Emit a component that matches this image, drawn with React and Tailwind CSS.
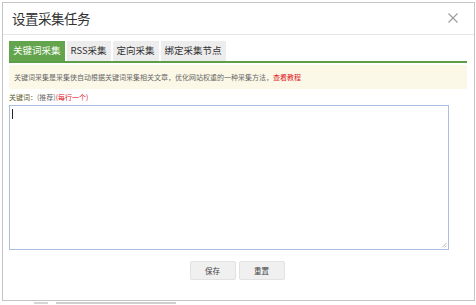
import React from 'react';

const font = { fontFamily: '"Noto Sans CJK SC", "Liberation Sans", sans-serif' };

const tabs = ['关键词采集', 'RSS采集', '定向采集', '绑定采集节点'];

const App = () => {
  return (
    <div className="relative w-[476px] h-[305px] bg-white overflow-hidden" style={font}>
      <div className="ml-[2px] mt-[2px] w-[473px] h-[299px] border border-[#c4c4c4] bg-white flex flex-col">
        {/* header */}
        <div className="h-[32px] shrink-0 border-b border-[#e6e6e6] flex items-center justify-between pl-[9px] pr-[16px]">
          <span className="text-[13.5px] text-[#333] leading-none tracking-[-0.5px]">设置采集任务</span>
          <svg width="10" height="10" viewBox="0 0 10 10" className="mt-[-2px]">
            <path d="M0.5 0.5 L9.5 9.5 M9.5 0.5 L0.5 9.5" stroke="#9a9a9a" strokeWidth="1.1" />
          </svg>
        </div>

        <div className="pl-[6px] pr-[7px] pt-[6px] flex flex-col">
          {/* tabs */}
          <div className="flex gap-[2px] border-b-2 border-[#5d9e48] h-[22px]">
            {tabs.map((t, i) => (
              <div
                key={t}
                className={`h-[20px] px-[4px] flex items-center text-[9.5px] leading-none ${
                  i === 0 ? 'bg-[#63a44d] text-white' : 'bg-[#ededed] text-[#333]'
                }`}
              >
                {t}
              </div>
            ))}
          </div>

          {/* info */}
          <div className="mt-[2px] h-[24px] bg-[#fbf8e7] rounded-[2px] flex items-center pl-[5px] text-[7px] text-[#666] leading-none">
            关键词采集是采集侠自动根据关键词采集相关文章，优化网站权重的一种采集方法，
            <span className="text-[#e0131b]">查看教程</span>
          </div>

          {/* label */}
          <div className="h-[16px] flex items-center text-[7px] leading-none">
            <span className="text-[#5d5a1e]">关键词：</span>
            <span className="text-[#666]">(推荐)</span>
            <span className="text-[#e0131b]">(每行一个)</span>
          </div>

          {/* textarea */}
          <div className="relative w-[440px] h-[145px] border border-[#a9bfe2] bg-white">
            <div className="ml-[2px] mt-[3px] w-px h-[10px] bg-[#222]" />
            <svg width="6" height="6" viewBox="0 0 6 6" className="absolute right-[1px] bottom-[1px]">
              <path d="M5.5 1 L1 5.5 M5.5 3.5 L3.5 5.5" stroke="#b0b0b0" strokeWidth="0.8" />
            </svg>
          </div>

          {/* buttons */}
          <div className="mt-[11px] flex justify-center gap-[3px] pr-[2px]">
            <button className="w-[46px] h-[19px] bg-[#f0f0f0] border border-[#e2e2e2] rounded-[2px] text-[7.5px] text-[#444] leading-none">
              保存
            </button>
            <button className="w-[46px] h-[19px] bg-[#f0f0f0] border border-[#e2e2e2] rounded-[2px] text-[7.5px] text-[#444] leading-none">
              重置
            </button>
          </div>
        </div>
      </div>
      {/* page behind the dialog, barely visible under its bottom edge */}
      <div className="absolute left-[34px] top-[302px] flex gap-[8px]">
        <div className="w-[14px] h-[2px] bg-[#d6d6d6]" />
        <div className="w-[120px] h-[2px] bg-[#cfcfcf]" />
      </div>
    </div>
  );
};

export default App;
